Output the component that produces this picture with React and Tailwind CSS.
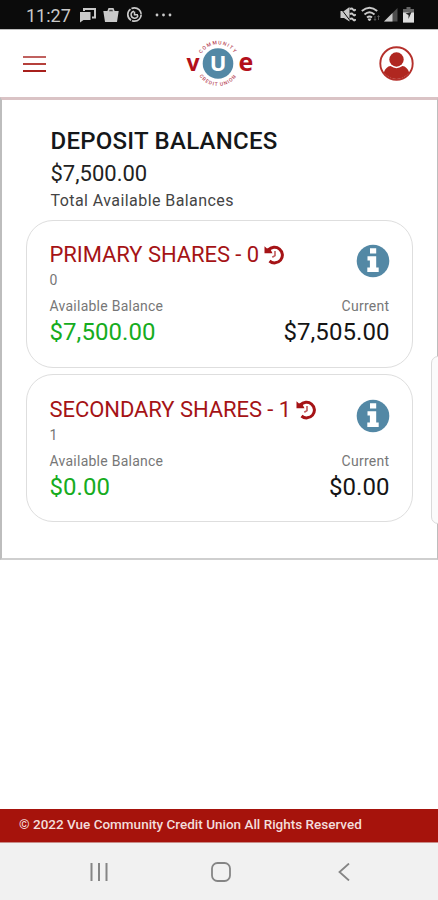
function StatusBar() {
  return (
    <div className="flex h-[29px] items-center bg-[#0b0b0b] pl-[26px] pr-[24px] text-[#c9c9c9]">
      <span className="w-[46px] whitespace-nowrap pt-[3px] text-[18px] leading-none">11:27</span>
      <svg className="ml-[7px] h-[16px] w-[17px]" viewBox="0 0 17 16">
        <path d="M5 4V2h11v8.500h-3" fill="none" stroke="currentColor" strokeWidth="2" />
        <path d="M1 5h10.500v8H4.500l-3.500 2.500z" fill="currentColor" />
      </svg>
      <svg className="ml-[7px] h-[17px] w-[16px]" viewBox="0 0 16 17">
        <path d="M0.300 5h15.400L14 16H2z" fill="currentColor" />
        <path d="M4 6l1.500-4h5L12 6z" fill="currentColor" />
        <path d="M6 5.200l.6-1.500h2.800l.6 1.500z" fill="#444" />
      </svg>
      <svg className="ml-[7px] h-[17px] w-[17px]" viewBox="0 0 17 17" fill="none" stroke="currentColor">
        <circle cx="8.500" cy="8.500" r="6.700" strokeWidth="1.700" strokeDasharray="13 1.100" />
        <path d="M8 5.200a3.500 3.500 0 1 0 4 4.200M8.500 5.500v3.200h3.500" strokeWidth="1.500" />
      </svg>
      <svg className="ml-[12px] h-[4px] w-[17px]" viewBox="0 0 17 4" fill="currentColor">
        <circle cx="2" cy="2" r="1.400" />
        <circle cx="8.500" cy="2" r="1.400" />
        <circle cx="15" cy="2" r="1.400" />
      </svg>
      <svg className="ml-auto h-[17px] w-[16px]" viewBox="0 0 16 17">
        <path d="M0.500 5h3.500L9.500 1v14.500L4 12H.5z" fill="currentColor" />
        <path d="M0 1.500l10 13" stroke="#0b0b0b" strokeWidth="1" />
        <path d="M10 3.500q1.500-2 3 0t2.500-.5M10 8.500q1.500-2 3 0t2.500-.5M10 13.500q1.500-2 3 0t2.500-.5" fill="none" stroke="currentColor" strokeWidth="2" />
      </svg>
      <svg className="ml-[5px] h-[17px] w-[19px]" viewBox="0 0 19 17" fill="none" stroke="currentColor">
        <path d="M.8 5q7.700-6.500 15.400 0M3.500 8.500q5-4.500 10 0M6 11.500q2.500-2 5 0" strokeWidth="1.900" />
        <path d="M7 13h3l-1.500 2z" fill="currentColor" />
        <path d="M14 10v4m-1-1l1 1.500L15 13M17.500 14v-4m-1 1l1-1.500 1 1.500" stroke="#666" strokeWidth=".8" />
      </svg>
      <svg className="ml-[4px] h-[15px] w-[14px]" viewBox="0 0 14 15">
        <path d="M0 14.500L13.500 1v13.500z" fill="#4d4d4d" />
        <path d="M0 14.500L8.500 6v8.500z" fill="#c9c9c9" />
      </svg>
      <svg className="ml-[5px] h-[17px] w-[11px]" viewBox="0 0 11 17">
        <path d="M3.500 1h4v2H11v13.500H0V3h3.500z" fill="#666" />
        <path d="M0 6.500h11v10H0z" fill="#dedede" />
        <path d="M2.500 7.500L8.500 6 5.500 13V9z" fill="#222" />
      </svg>
    </div>
  );
}

function Logo() {
  return (
    <svg className="h-[56px] w-[72px]" viewBox="0 0 72 56" role="img" aria-label="Vue Community Credit Union">
      <defs>
        <path id="arc-top" d="M14.800 27.500a19.200 19.200 0 0 1 38.400 0" />
        <path id="arc-bottom" d="M11.500 27.500a22.500 22.500 0 0 0 45 0" />
      </defs>
      <circle cx="34" cy="27.500" r="15.300" fill="#5388a5" />
      <text x="34" y="35" textAnchor="middle" fontFamily="Open Sans" fontWeight="700" fontSize="22" fill="#fff">U</text>
      <text x="2.500" y="35" fontFamily="Open Sans" fontWeight="700" fontSize="23" fill="#b3101b">v</text>
      <text x="54.500" y="35" fontFamily="Open Sans" fontWeight="700" fontSize="25" fill="#b3101b">e</text>
      <g fontFamily="Roboto" fontSize="5" fontWeight="500" fill="#b94a5a" textAnchor="middle">
        <text letterSpacing="1.100"><textPath href="#arc-top" startOffset="50%">COMMUNITY</textPath></text>
        <text letterSpacing=".9"><textPath href="#arc-bottom" startOffset="50%">CREDIT UNION</textPath></text>
      </g>
    </svg>
  );
}

function Header() {
  return (
    <header className="flex h-[68px] items-center border-t border-[#bdbdbd] bg-white pl-[23px] pr-[24px]">
      <button aria-label="Menu" className="flex flex-col gap-[5px]">
        <span className="h-[2px] w-[23px] bg-[#c0615f]" />
        <span className="h-[2px] w-[23px] bg-[#b5403b]" />
        <span className="h-[2px] w-[23px] bg-[#a8201c]" />
      </button>
      <div className="ml-[138px]"><Logo /></div>
      <button aria-label="Profile" className="ml-auto">
        <svg className="h-[35px] w-[35px]" viewBox="0 0 35 35">
          <circle cx="17.500" cy="17.500" r="16.200" fill="#fff" stroke="#b5302b" strokeWidth="1.900" />
          <circle cx="17.500" cy="13.500" r="7.200" fill="#b02720" />
          <path d="M4.800 26.500Q7 20.500 11.500 20q6 4.300 12 0 4.500.5 6.700 6.500a15.800 15.800 0 0 1-25.400 0z" fill="#b02720" />
        </svg>
      </button>
    </header>
  );
}

function HistoryIcon() {
  return (
    <svg className="h-[20px] w-[20px]" viewBox="0 0 20 20" fill="none" stroke="currentColor">
      <path d="M4.500 5.200A7.800 7.800 0 1 1 5.500 16" strokeWidth="3" />
      <path d="M.5 1.200L3 3.500l2.500-1L8.500 8.200H.5z" fill="currentColor" stroke="none" />
      <path d="M11 6v4.600L8.300 12.300" strokeWidth="1.600" opacity=".7" />
    </svg>
  );
}

function InfoIcon() {
  return (
    <svg className="h-[34px] w-[34px]" viewBox="0 0 34 34">
      <circle cx="17" cy="17" r="16.300" fill="#5388a5" />
      <path d="M14 4.300h6.200v5.200H14zM11.500 12.200h8.700v11.300h2.500v4.500H11.300v-4.500h2.600v-7h-2.400z" fill="#fff" />
    </svg>
  );
}

function AccountCard({ name, number, available, current, padding }) {
  return (
    <section className={"flex h-[148px] flex-col rounded-[27px] border-[1.500px] border-[#dedede] bg-white pl-[22.500px] pr-[22.500px] " + padding}>
      <div className="flex h-[45px] justify-between">
        <div>
          <h2 className="flex items-center gap-[5px] whitespace-nowrap text-[22px] leading-[30px] tracking-[-0.06px] text-[#a51316]">
            {name}
            <HistoryIcon />
          </h2>
          <p className="text-[14px] leading-[20px] text-[#777]">{number}</p>
        </div>
        <div className="pt-[4px]"><InfoIcon /></div>
      </div>
      <div className="flex justify-between pt-[11px] text-[14px] leading-[20px] text-[#777]">
        <span className="tracking-[0.25px]">Available Balance</span>
        <span className="tracking-[0.3px]">Current</span>
      </div>
      <div className="flex justify-between text-[24px] leading-[32px]">
        <span className="tracking-[0.06px] text-[#16ac20]">{available}</span>
        <span className="tracking-[0.06px] text-[#151515]">{current}</span>
      </div>
    </section>
  );
}

export default function App() {
  return (
    <div className="relative flex h-[900px] w-[438px] flex-col overflow-hidden bg-white font-['Roboto',sans-serif]">
      <StatusBar />
      <Header />
      <main className="flex h-[463px] flex-col border-b-2 border-l-2 border-r border-t-[3px] border-b-[#cfcfcf] border-l-[#bdbdbd] border-r-[#bdbdbd] border-t-[#dac3c5] px-[24px] pt-[28px]">
        <div className="h-[92px] pl-[24.500px]">
          <h1 className="whitespace-nowrap text-[24px] font-medium leading-[27px] tracking-[0.25px] text-[#151719]">DEPOSIT BALANCES</h1>
          <p className="pt-[3px] text-[22px] leading-[32px] text-[#222]">$7,500.00</p>
          <p className="-mt-px text-[16px] leading-[24px] tracking-[0.43px] text-[#444]">Total Available Balances</p>
        </div>
        <div className="flex flex-col gap-[6px]">
          <AccountCard name="PRIMARY SHARES - 0" number="0" available="$7,500.00" current="$7,505.00" padding="pt-[19px]" />
          <AccountCard name="SECONDARY SHARES - 1" number="1" available="$0.00" current="$0.00" padding="pt-[20px]" />
        </div>
      </main>
      <div className="absolute left-[431px] top-[356px] h-[168px] w-[14px] rounded-[7px] border-[1.500px] border-[#dadada] bg-[#fbfbfb]" />
      <footer className="mt-auto flex h-[34px] items-center border-b border-[#c98c88] bg-[#a6130c] pb-[3px] pl-[19px] text-[13.500px] font-medium text-[#f3dddb]">
        <span className="whitespace-nowrap">© 2022 Vue Community Credit Union All Rights Reserved</span>
      </footer>
      <nav className="flex h-[57px] items-center bg-[#f1f1f1] pl-[90px] text-[#858585]">
        <svg className="h-[18px] w-[18px]" viewBox="0 0 18 18" stroke="currentColor" strokeWidth="2">
          <path d="M1.500 0v18M9 0v18M16.500 0v18" />
        </svg>
        <svg className="ml-[103px] h-[20px] w-[20px]" viewBox="0 0 20 20" fill="none" stroke="currentColor" strokeWidth="1.800">
          <rect x="1" y="1" width="18" height="18" rx="5.500" />
        </svg>
        <svg className="ml-[107px] h-[18px] w-[12px]" viewBox="0 0 12 18" fill="none" stroke="currentColor" strokeWidth="1.800">
          <path d="M11 .5L1.500 9l9.500 8.500" />
        </svg>
      </nav>
    </div>
  );
}
